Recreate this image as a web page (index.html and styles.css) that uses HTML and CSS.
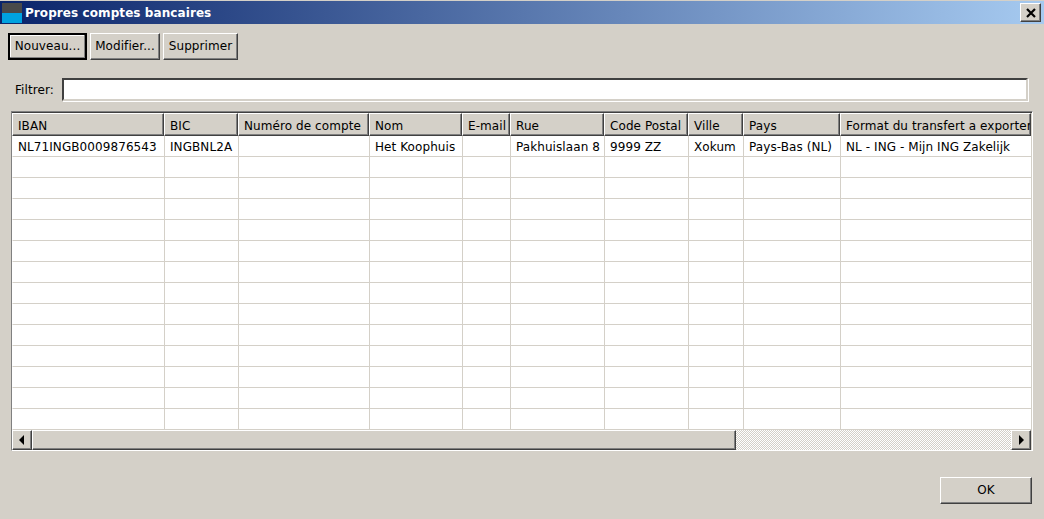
FILE: index.html
```html
<!DOCTYPE html>
<html lang="fr">
<head>
<meta charset="utf-8">
<title>Propres comptes bancaires</title>
<link rel="stylesheet" href="styles.css">
</head>
<body>
<div class="window">
  <header class="titlebar">
    <svg class="appicon" width="20" height="20" viewBox="0 0 20 20"><rect width="20" height="10" fill="#4a4a4a"/><rect y="10" width="20" height="10" fill="#00a2e0"/></svg>
    <span class="title">Propres comptes bancaires</span>
    <button class="close" aria-label="Fermer"><svg width="10" height="10" viewBox="0 0 10 10"><path d="M1 1 L9 9 M9 1 L1 9" stroke="#000" stroke-width="2.2" fill="none"/></svg></button>
  </header>
  <div class="toolbar">
    <button class="btn default nouveau">Nouveau...</button>
    <button class="btn modifier">Modifier...</button>
    <button class="btn supprimer">Supprimer</button>
  </div>
  <div class="filter">
    <label class="filter-label">Filtrer:</label>
    <div class="filter-input"></div>
  </div>
  <div class="panel">
    <div class="grid-wrap">
      <table class="grid">
        <colgroup>
          <col class="c1"><col class="c2"><col class="c3"><col class="c4"><col class="c5"><col class="c6"><col class="c7"><col class="c8"><col class="c9"><col class="c10">
        </colgroup>
        <thead>
          <tr><th>IBAN</th><th>BIC</th><th>Numéro de compte</th><th>Nom</th><th>E-mail</th><th>Rue</th><th>Code Postal</th><th>Ville</th><th>Pays</th><th>Format du transfert a exporter</th></tr>
        </thead>
        <tbody>
          <tr><td>NL71INGB0009876543</td><td>INGBNL2A</td><td></td><td>Het Koophuis</td><td></td><td>Pakhuislaan 8</td><td>9999 ZZ</td><td>Xokum</td><td>Pays-Bas (NL)</td><td>NL - ING - Mijn ING Zakelijk</td></tr>
          <tr><td></td><td></td><td></td><td></td><td></td><td></td><td></td><td></td><td></td><td></td></tr>
          <tr><td></td><td></td><td></td><td></td><td></td><td></td><td></td><td></td><td></td><td></td></tr>
          <tr><td></td><td></td><td></td><td></td><td></td><td></td><td></td><td></td><td></td><td></td></tr>
          <tr><td></td><td></td><td></td><td></td><td></td><td></td><td></td><td></td><td></td><td></td></tr>
          <tr><td></td><td></td><td></td><td></td><td></td><td></td><td></td><td></td><td></td><td></td></tr>
          <tr><td></td><td></td><td></td><td></td><td></td><td></td><td></td><td></td><td></td><td></td></tr>
          <tr><td></td><td></td><td></td><td></td><td></td><td></td><td></td><td></td><td></td><td></td></tr>
          <tr><td></td><td></td><td></td><td></td><td></td><td></td><td></td><td></td><td></td><td></td></tr>
          <tr><td></td><td></td><td></td><td></td><td></td><td></td><td></td><td></td><td></td><td></td></tr>
          <tr><td></td><td></td><td></td><td></td><td></td><td></td><td></td><td></td><td></td><td></td></tr>
          <tr><td></td><td></td><td></td><td></td><td></td><td></td><td></td><td></td><td></td><td></td></tr>
          <tr><td></td><td></td><td></td><td></td><td></td><td></td><td></td><td></td><td></td><td></td></tr>
          <tr><td></td><td></td><td></td><td></td><td></td><td></td><td></td><td></td><td></td><td></td></tr>
        </tbody>
      </table>
    </div>
    <div class="scrollbar">
      <div class="sb-btn"><svg width="6" height="10" viewBox="0 0 6 10"><path d="M5 0 L0 5 L5 10 Z" fill="#000"/></svg></div>
      <div class="sb-thumb"></div>
      <div class="sb-track"></div>
      <div class="sb-btn"><svg width="6" height="10" viewBox="0 0 6 10"><path d="M1 0 L6 5 L1 10 Z" fill="#000"/></svg></div>
    </div>
  </div>
  <div class="footer">
    <button class="btn ok">OK</button>
  </div>
</div>
</body>
</html>
```
FILE: styles.css
```css
* { box-sizing: border-box; }
html, body { margin: 0; padding: 0; }
body {
  width: 1044px;
  height: 519px;
  overflow: hidden;
  background: #d4d0c8;
  font-family: "DejaVu Sans", sans-serif;
  font-size: 12px;
  letter-spacing: 0.08px;
  color: #000;
}
.window { display: flex; flex-direction: column; height: 519px; }
.titlebar {
  height: 24px;
  display: flex;
  align-items: center;
  padding: 0 3px 0 2px;
  border-top: 1px solid #d4d0c8;
  background: linear-gradient(90deg, #0a246a, #a6caf0);
  color: #fff;
}
.appicon { flex: none; margin-right: 3px; }
.title { flex: 1; font-weight: 700; font-size: 12px; }
.close {
  width: 21px; height: 19px; padding: 0; margin: 0;
  display: flex; align-items: center; justify-content: center;
  background: #d4d0c8;
  border: 1px solid; border-color: #fff #404040 #404040 #fff;
  box-shadow: inset -1px -1px #808080;
}
.toolbar { display: flex; gap: 3px; padding: 9px 0 0 8px; }
.btn {
  height: 27px; padding: 0 0 2px;
  background: #d4d0c8;
  font-family: inherit; font-size: 12px; letter-spacing: inherit; color: #000;
  border: 1px solid; border-color: #fff #404040 #404040 #fff;
  box-shadow: inset -1px -1px #808080;
}
.btn.default { border: 2px solid #000; box-shadow: inset -1px -1px #808080, inset 1px 1px #fff; }
.nouveau { width: 79px; }
.modifier { width: 70px; }
.supprimer { width: 75px; }
.filter { display: flex; align-items: center; height: 23px; margin-top: 18px; padding-left: 15px; }
.filter-label { width: 47px; }
.filter-input {
  width: 966px; height: 23px; background: #fff;
  border: 2px solid; border-color: #404040 #d4d0c8 #d4d0c8 #404040;
  box-shadow: 1px 1px 0 #fff;
}
.panel {
  width: 1022px; height: 340px; margin: 10px 0 0 11px;
  border: 1px solid; border-color: #808080 #fff #fff #808080;
  box-shadow: inset 1px 0 #404040, inset 0 1px #404040;
  padding: 1px 1px 0 0;
  display: flex; flex-direction: column;
  background: #d4d0c8;
}
.grid-wrap { height: 317px; flex: none; overflow: hidden; background: #fff; }
.grid { table-layout: fixed; border-collapse: separate; border-spacing: 0; width: 1019px; }
.c1 { width: 152px; } .c2 { width: 74px; } .c3 { width: 131px; } .c4 { width: 93px; } .c5 { width: 48px; }
.c6 { width: 94px; } .c7 { width: 84px; } .c8 { width: 55px; } .c9 { width: 97px; } .c10 { width: 191px; }
th, td { white-space: nowrap; overflow: hidden; font-weight: 400; text-align: left; font-size: 12px; }
th {
  height: 23px; background: #d4d0c8;
  border-right: 1px solid #404040;
  border-bottom: 1px solid #404040;
  border-left: 1px solid #fff;
  border-top: 1px solid #fff;
  box-shadow: inset -1px -1px #808080;
  padding: 2px 0 0 5px;
}
td { height: 21px; border-left: 1px solid #d4d0c8; border-bottom: 1px solid #d4d0c8; padding: 2px 0 0 5px; }
td:first-child { border-left-color: #fff; }
.scrollbar { flex: none; height: 20px; display: flex; }
.sb-btn, .sb-thumb {
  background: #d4d0c8;
  border: 1px solid; border-color: #fff #404040 #404040 #fff;
  box-shadow: inset -1px -1px #808080;
}
.sb-btn { width: 20px; flex: none; display: flex; align-items: center; justify-content: center; }
.sb-thumb { width: 704px; flex: none; }
.sb-track {
  flex: 1;
  background-color: #fff;
  background-image: conic-gradient(#d4d0c8 25%, #fff 0 50%, #d4d0c8 0 75%, #fff 0);
  background-size: 2px 2px;
}
.footer { display: flex; justify-content: flex-end; padding: 26px 12px 0 0; }
.ok { width: 92px; }
```
